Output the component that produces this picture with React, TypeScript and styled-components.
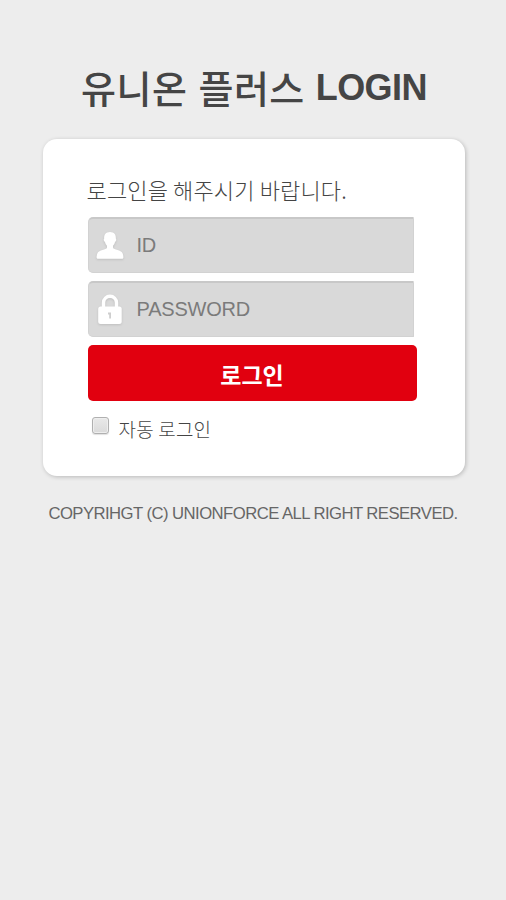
import React from 'react';
import styled, { createGlobalStyle } from 'styled-components';

const GlobalStyle = createGlobalStyle`
  * { box-sizing: border-box; }
  body {
    margin: 0;
    background: #ededed;
    font-family: "Liberation Sans", "Noto Sans CJK KR", sans-serif;
  }
`;

const Page = styled.main`
  width: 506px;
  height: 900px;
  overflow: hidden;
  display: flex;
  flex-direction: column;
  align-items: center;
  background: #ededed;
`;

const Title = styled.h1`
  display: flex;
  align-items: flex-start;
  gap: 11px;
  width: 344px;
  height: 75px;
  margin: 64px 0 0;
  font-size: 36px;
  line-height: 48px;
  font-weight: 700;
  color: #454545;
  white-space: nowrap;
`;

const Hangul = styled.span`
  font-family: "Noto Sans CJK KR", sans-serif;
  font-size: 38px;
  line-height: 46px;
  font-weight: 500;
  letter-spacing: 0.5px;
  word-spacing: 2px;
`;

const Latin = styled.span`
  letter-spacing: -0.6px;
`;

const Card = styled.form`
  width: 422px;
  height: 337px;
  margin-left: 1px;
  padding: 38px 47px 0 45px;
  border-radius: 14px;
  background: #fff;
  box-shadow: 1px 1px 4px rgba(0, 0, 0, 0.22);
`;

const Prompt = styled.p`
  height: 42px;
  margin: -2px 0 0 -1px;
  font: 300 22px/28px "Noto Sans CJK KR", sans-serif;
  letter-spacing: 0.15px;
  color: #444;
  white-space: nowrap;
`;

const Field = styled.label`
  display: flex;
  align-items: center;
  width: 326px;
  height: 56px;
  margin-bottom: 8px;
  padding-left: 7px;
  border: 1px solid #d2d2d2;
  border-top: 2px solid #c8c8c8;
  border-radius: 5px 1px 1px 5px;
  background: #d9d9d9;
`;

const Input = styled.input`
  width: 250px;
  margin: 0 0 0 13px;
  padding: 0;
  border: 0;
  outline: 0;
  background: transparent;
  font: 20px "Liberation Sans", sans-serif;
  letter-spacing: -0.2px;
  color: #555;
  &::placeholder { color: #7b7b7b; opacity: 1; }
`;

const Icon = styled.svg`
  width: 28px;
  height: 34px;
  flex: none;
  margin-top: -2px;
  filter: drop-shadow(0 1px 1px rgba(0, 0, 0, 0.12));
`;

const LoginButton = styled.button`
  display: block;
  width: 329px;
  height: 56px;
  padding: 1px 0 0;
  border: 0;
  border-radius: 5px;
  background: #e1000f;
  color: #fff;
  font: 700 23px/28px "Noto Sans CJK KR", sans-serif;
`;

const Remember = styled.label`
  display: flex;
  align-items: center;
  gap: 10px;
  height: 26px;
  margin: 15px 0 0 4px;
  font: 300 19px/26px "Noto Sans CJK KR", sans-serif;
  letter-spacing: 0.2px;
  color: #444;
`;

const Checkbox = styled.input`
  appearance: none;
  width: 17px;
  height: 17px;
  margin: 0 0 8px;
  border: 1px solid #b0b0b0;
  border-radius: 3px;
  background: linear-gradient(#e9e9e9, #dadada);
  box-shadow: inset 0 0 0 1px #eee, 0 1px 1px rgba(0, 0, 0, 0.12);
`;

const Copyright = styled.footer`
  margin-top: 28px;
  font-size: 16.7px;
  line-height: 20px;
  letter-spacing: -0.55px;
  color: #666;
  white-space: nowrap;
`;

export default function App() {
  return (
    <>
      <GlobalStyle />
      <Page>
        <Title>
          <Hangul>유니온 플러스</Hangul>
          <Latin>LOGIN</Latin>
        </Title>
        <Card onSubmit={(e: React.FormEvent) => e.preventDefault()}>
          <Prompt>로그인을 해주시기 바랍니다.</Prompt>
          <Field>
            <Icon viewBox="0 0 28 34" fill="#fff">
              <path d="M14 4c-4 0-6.200 2.800-5.800 6.600-.9.500-.4 2.800.8 3.300.4 1.800 1.200 3 2 3.800v2.100c-.6 2-8.200 2.500-9.400 5.100C1 26.100.6 28 .6 29.200c0 1 .6 1.600 1.600 1.600h23.600c1 0 1.600-.6 1.600-1.600 0-1.200-.4-3.100-1-4.300-1.200-2.600-8.800-3.100-9.400-5.100v-2.100c.8-.8 1.600-2 2-3.800 1.200-.5 1.700-2.800.8-3.300C20.200 6.800 18 4 14 4z" />
            </Icon>
            <Input placeholder="ID" aria-label="ID" />
          </Field>
          <Field>
            <Icon viewBox="0 0 28 34">
              <path d="M7.500 16v-5.300a6.500 6.500 0 0 1 13 0V16" fill="none" stroke="#fff" strokeWidth="3.400" />
              <rect x="2.200" y="14.500" width="23.500" height="17.500" rx="2.500" fill="#fff" />
              <path d="M12 20.500h3v6h-1.800v-4H12z" fill="#cecece" />
            </Icon>
            <Input type="password" placeholder="PASSWORD" aria-label="PASSWORD" />
          </Field>
          <LoginButton type="submit">로그인</LoginButton>
          <Remember>
            <Checkbox type="checkbox" />
            자동 로그인
          </Remember>
        </Card>
        <Copyright>COPYRIHGT (C) UNIONFORCE ALL RIGHT RESERVED.</Copyright>
      </Page>
    </>
  );
}
